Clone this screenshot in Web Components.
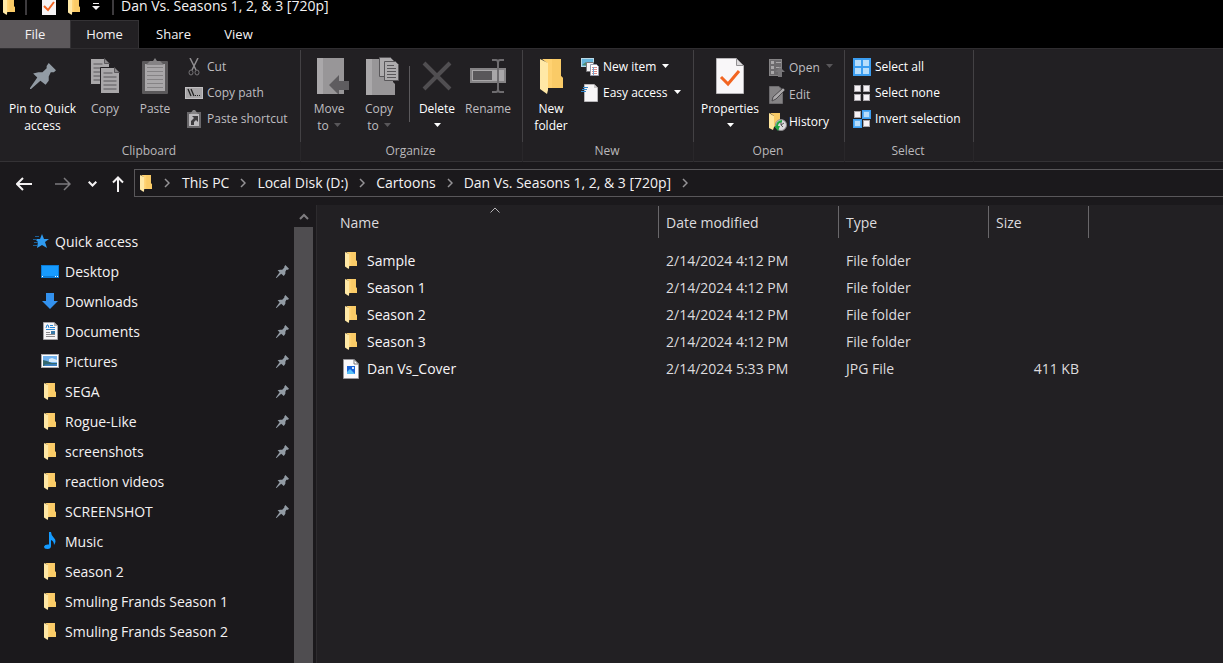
<!DOCTYPE html>
<html lang="en">
<head>
<meta charset="utf-8">
<title>Dan Vs. Seasons 1, 2, &amp; 3 [720p]</title>
<style>
  html, body { margin: 0; height: 100%; background: #1b191c; }
  body { font-family: "Open Sans", "Noto Sans", sans-serif; color: #f4f2f3; overflow: hidden; }
</style>
</head>
<body>
<explorer-window></explorer-window>
<script>
const folder = '<path d="M2 0H21V17L23 19V29H7V4z" fill="#ffd271"/><path d="M12 0H21V17L23 19V29H12z" fill="#f6c661" opacity=".6"/><path d="M0 0L8 4V31L7 35L0 30z" fill="#ffe8a6"/>';
const sheet = (x, y) => `<g transform="translate(${x} ${y})"><path d="M0 0H14L19 5V26H0z" fill="#a9a7a9" stroke="#222023"/><path d="M14 0V5H19" fill="#8a888a" stroke="#59575a"/><path d="M3 5.5H12M3 9.5H16M3 13.5H16M3 17.500H16M3 21.500H16" stroke="#59575a"/></g>`;
const tile = (x, y, on) => `<rect x="${x}" y="${y}" width="6" height="6" fill="${on ? '#b7ddfb' : '#f6f2f6'}" stroke="${on ? '#5aaef2' : '#a9a6aa'}"/>`;
const pin = '<path d="M18 0L25 7L23 9H20L18 13V17L15 21L10 17L1 25H0V24L7 14L3 10L8 9H12L16 5V3z" fill="#929ba4"/>';
const ICONS = {
  folder: ['0 0 23 35', 12, 17, folder],
  folderBig: ['0 0 23 35', 23, 35, folder],
  pin: ['0 0 25 25', 13, 13, pin],
  pinBig: ['0 0 25 25', 26, 26, pin],
  check: ['0 0 14 18', 14, 18, '<path d="M0 0H11L14 3V18H0z" fill="#f5f3f5"/><path d="M2 9L6 13L12 5" fill="none" stroke="#f26522" stroke-width="2"/>'],
  customize: ['0 0 8 7', 8, 7, '<path d="M1 0H7V1H1zM0 3H8L4 7z" fill="#f4f2f3"/>'],
  copy: ['0 0 30 36', 30, 36, sheet(0.5, 0.5) + sheet(10.5, 9.5)],
  paste: ['0 0 26 36', 26, 36, '<rect y="3" width="26" height="33" rx="1" fill="#5b595b"/><rect x="3" y="6" width="20" height="27" fill="#a9a7a9"/><path d="M5 9.500H21M5 13.500H21M5 17.500H21M5 21.500H21M5 25.500H21M5 29.500H21" stroke="#858385"/><path d="M4 7L8 3H11L13 0L15 3H18L22 7z" fill="#858385"/>'],
  cut: ['0 0 12 18', 18, 18, '<path d="M2 0L8 12M10 0L4 12" fill="none" stroke="#8f8d90" stroke-width="1.500"/><ellipse cx="3" cy="14.500" rx="2" ry="2.500" fill="none" stroke="#777578"/><ellipse cx="9" cy="14.500" rx="2" ry="2.500" fill="none" stroke="#777578"/>'],
  path: ['0 0 18 12', 18, 12, '<rect x=".5" y=".5" width="17" height="11" fill="#a7a5a7" stroke="#c2c0c2"/><path d="M3 2L6 9M6 2L9 9" stroke="#222" stroke-width="1.300"/><path d="M10 8H11V9H10zM12 8H13V9H12zM14 8H15V9H14z" fill="#222"/>'],
  shortcut: ['0 0 14 18', 18, 18, '<rect y="2" width="14" height="16" fill="#69676a"/><path d="M2 4H12V16H2z" fill="#bcbabd"/><path d="M3 4L6 0H8L11 4z" fill="#858385"/><path d="M5 6H11V12L9 10L7 12V15H4V11L7 8z" fill="#3d3b3e"/>'],
  move: ['-8 0 40 36', 40, 36, '<path d="M0 0H27V36H0z" fill="#989698"/><path d="M0 0H6V36H0z" fill="#aaa8aa"/><path d="M12 27L22 17V23H32V32H22V37z" fill="#5e5c5f"/>'],
  copyTo: ['-8 0 42 38', 42, 38, '<path d="M0 2H27V25L29 27V38H0z" fill="#989698"/><path d="M0 2H6V38H0z" fill="#aaa8aa"/><g fill="#aeacae" stroke="#59575a"><path d="M13.500.5H24.500L27.500 3.500V19.500H13.500z"/><path d="M18.500 4.500H29.500L32.500 7.500V23.500H18.500z"/><path d="M21 8.500H28M21 11.500H30M21 14.500H30M21 17.500H30M21 20.500H30"/></g>'],
  del: ['0 0 30 30', 30, 30, '<path d="M2 2L28 28M28 2L2 28" stroke="#504e51" stroke-width="4"/>'],
  rename: ['0 0 36 34', 36, 34, '<rect x="1" y="10" width="34" height="13" fill="#a9a7a9" stroke="#858385" stroke-width="2"/><rect x="3" y="12" width="19" height="9" fill="#59575a"/><path d="M22 1H26Q28 1 28 4Q28 1 30 1H34M28 3V31M22 33H26Q28 33 28 30Q28 33 30 33H34" fill="none" stroke="#6e6c6f" stroke-width="2"/>'],
  newItem: ['0 0 18 18', 18, 18, '<rect x=".5" y=".5" width="12" height="8" fill="#67b5dc" stroke="#bad9e7"/><path d="M1 7L5 4L9 8z" fill="#4f8c73"/><path d="M5.500 4.500H12.500V13.500H5.500z" fill="#f5f3f5" stroke="#77767a"/><path d="M9.500 6.500H15.500L17.500 8.500V17.500H9.500z" fill="#fff" stroke="#99a"/><path d="M11 9.500H16M11 11.500H16M11 13.500H16M11 15.500H16" stroke="#d88"/><path d="M12.500 9V17" stroke="#6aa9db"/>'],
  easy: ['0 0 18 18', 18, 18, '<path d="M3.500.5H13L16.500 4V17.500H3.500z" fill="#f8f6f8" stroke="#b7b5b8"/><path d="M13 0V4H17z" fill="#c9c7c9"/><path d="M2 3.500H7M1 5.500H6M0 7.500H5" stroke="#3187cc"/>'],
  props: ['0 0 28 36', 28, 36, '<path d="M.5.5H20.500L27.500 7.500V35.500H.5z" fill="#f9f7f9" stroke="#b7b5b8"/><path d="M20.500.5V7.500H27.500z" fill="#dddbdd" stroke="#918f92"/><path d="M5 19L12 26L23 13" fill="none" stroke="#f26522" stroke-width="3"/>'],
  open: ['0 0 18 18', 18, 18, '<rect x=".5" y=".5" width="12" height="16" fill="#6d6b6e" stroke="#858385"/><path d="M2 2H5V5H2zM2 7H5V10H2zM2 12H5V15H2z" fill="#a9a7a9"/><path d="M7 3.500H12M7 8.500H12" stroke="#a9a7a9"/><path d="M11 8L16 13H13V18H9V13H6z" fill="#777578"/>'],
  edit: ['0 0 18 18', 18, 18, '<path d="M.5.5H10L13.500 4V17.500H.5z" fill="#858385" stroke="#6d6b6e"/><path d="M3 15L4 11L14 2L16 4L7 13z" fill="#aaa8aa" stroke="#4c4a4d"/>'],
  history: ['0 0 18 18', 18, 18, '<path d="M1 0H11V14H5V3z" fill="#f7ca66"/><path d="M0 0L5 3V14L4 17L0 15z" fill="#ffe59c"/><circle cx="12" cy="12" r="5.500" fill="#dcdadd" stroke="#8b898c"/><path d="M12 9V12L15 10M12 12L14 14" fill="none" stroke="#555"/><path d="M13 7Q7 8 7 13H5L9 18L11 13H9Q9 10 13 9z" fill="#22a443"/>'],
  selAll: ['0 0 18 18', 18, 18, '<rect width="18" height="18" fill="#3b9df0"/><path d="M2 2H8V8H2zM10 2H16V8H10zM2 10H8V16H2zM10 10H16V16H10z" fill="#b7ddfb"/>'],
  selNone: ['0 0 18 18', 18, 18, tile(1.5, 1.5) + tile(10.5, 1.5) + tile(1.5, 10.5) + tile(10.5, 10.5)],
  selInv: ['0 0 18 18', 18, 18, '<path d="M9 0H18V9H9V18H0V9H9z" fill="#3b9df0"/>' + tile(1.5, 1.5) + tile(10.5, 1.5, 1) + tile(1.5, 10.5, 1) + tile(10.5, 10.5)],
  back: ['0 0 16 14', 16, 14, '<path d="M1 7H16M7 1L1 7L7 13" fill="none" stroke="currentColor" stroke-width="2"/>'],
  fwd: ['0 0 16 14', 16, 14, '<path d="M0 7H15M9 1L15 7L9 13" fill="none" stroke="currentColor" stroke-width="1.500"/>'],
  down: ['0 0 9 6', 9, 6, '<path d="M.7.7L4.500 4.500L8.300.7" fill="none" stroke="currentColor" stroke-width="2"/>'],
  up: ['0 0 12 16', 12, 16, '<path d="M6 16V1M1 6.500L6 1.500L11 6.500" fill="none" stroke="currentColor" stroke-width="2"/>'],
  crumb: ['0 0 6 10', 6, 10, '<path d="M1 1L5 5L1 9" fill="none" stroke="#959396" stroke-width="1.500"/>'],
  sort: ['0 0 10 6', 10, 6, '<path d="M.5 5.500L5 1L9.500 5.500" fill="none" stroke="#b5b3b6"/>'],
  scrollUp: ['0 0 10 7', 10, 7, '<path d="M1 6L5 2L9 6" fill="none" stroke="#7f7d80" stroke-width="2"/>'],
  star: ['0 0 18 16', 18, 16, '<path d="M10 1L12 6L17 6L13 9L15 15L10 12L5 15L6 9L3 6H8z" fill="#2f9bf0"/><path d="M3 3.500H7M1 6.500H5M2 9.500H6M1 12.500H5" stroke="#1c5f96"/>'],
  desktop: ['0 0 18 13', 18, 13, '<rect width="18" height="13" fill="#0b7bd6"/><path d="M1 1H17V11H1z" fill="#179bff"/><path d="M1 11H2V12H1zM14 11H15V12H14zM16 11H17V12H16z" fill="#fff"/>'],
  downloads: ['0 0 16 16', 16, 16, '<path d="M4 0H12V8H16L8 16L0 8H4z" fill="#3391ee"/>'],
  documents: ['0 0 15 18', 15, 18, '<path d="M.5.5H11L14.500 4V17.500H.5z" fill="#f7f5f7" stroke="#a3a1a4"/><path d="M11 0V4H15z" fill="#aeacae"/><path d="M3 6L4 3H5L6 6" fill="none" stroke="#2786d4"/><path d="M7 3.500H10M7 5.500H12M3 7.500H12" stroke="#2786d4"/><path d="M3 10.500H7M3 12.500H12M3 14.500H12" stroke="#8a888b"/><path d="M8 9H12V12H8z" fill="#3a79a8"/>'],
  pictures: ['0 0 18 14', 18, 14, '<rect x=".5" y=".5" width="17" height="13" fill="#fff" stroke="#aaa8ab"/><path d="M2 2H16V12H2z" fill="#73b3ef"/><path d="M8 5L11 4L16 6V8H8z" fill="#d8ebfa"/><path d="M2 6L6 7L11 9L16 9V12H2z" fill="#35696f"/><path d="M4 10.500L16 10V12H3z" fill="#3d82c5"/>'],
  music: ['0 0 12 18', 12, 18, '<path d="M5 0H7Q7 3 10 6Q13 9 10 13Q10 9 7 8V14Q7 17 3.500 17Q0 17 0 14.500Q1 12 5 12.500z" fill="#149bff"/>'],
  jpg: ['0 0 16 20', 16, 20, '<path d="M.5.5H11L15.500 5V19.500H.5z" fill="#fbf9fb" stroke="#98969a"/><path d="M11 .5V5H15.500z" fill="#fff" stroke="#77757a"/><path d="M4 7H12V15H4z" fill="#1a63d8"/><path d="M4 15V13L7 10L12 15z" fill="#57c0f8"/><path d="M9 8H11V10H9z" fill="#cfe6ff"/>'],
  caret: ['0 0 7 4', 7, 4, '<path d="M0 0H7L3.500 4z" fill="currentColor"/>']
};

const RESET = `
  button { font: inherit; color: inherit; background: none; border: 0; padding: 0; margin: 0; text-align: inherit; }
  a { color: inherit; text-decoration: none; }
`;

function define(name, markup) {
  customElements.define(name, class extends HTMLElement {
    connectedCallback() {
      if (this.shadowRoot) return;
      const t = document.createElement('template');
      t.innerHTML = typeof markup === 'function' ? markup(this) : markup;
      this.attachShadow({ mode: 'open' }).append(t.content.cloneNode(true));
    }
  });
}

define('ui-icon', el => {
  const [box, w, h, body] = ICONS[el.getAttribute('name')];
  return `<style>:host { display: block; flex: none; } svg { display: block; margin: auto; }</style>
    <svg viewBox="${box}" width="${w}" height="${h}" ${w < 13 ? 'preserveAspectRatio="none"' : ''} aria-hidden="true">${body}</svg>`;
});

define('title-bar', `
  <style>
    ${RESET}
    :host { display: flex; align-items: flex-start; height: 20px; background: #000; }
    .tools { display: flex; align-items: center; height: 20px; margin-top: -4px; padding-left: 3px; }
    .bar { width: 2px; height: 18px; background: #3d3b3e; margin: 0 15px 0 10px; }
    .bar.end { margin: 0 7px 0 12px; }
    button { margin-right: 12px; }
    button.last { margin-right: 0; }
    .title { font-size: 14px; line-height: 20px; }
  </style>
  <div class="tools">
    <ui-icon name="folder"></ui-icon><span class="bar"></span>
    <button aria-label="Properties"><ui-icon name="check"></ui-icon></button>
    <button aria-label="New folder"><ui-icon name="folder"></ui-icon></button>
    <button class="last" aria-label="Customize toolbar"><ui-icon name="customize"></ui-icon></button>
    <span class="bar end"></span>
    <span class="title">Dan Vs. Seasons 1, 2, &amp; 3 [720p]</span>
  </div>`);

define('ribbon-tabs', `
  <style>
    ${RESET}
    :host { display: flex; height: 28px; background: #000; font-size: 13px; }
    button { box-sizing: border-box; height: 28px; padding: 0; text-align: center; }
    .file { width: 70px; background: #5c585b; }
    .home { width: 69px; background: #222023; border: 1px solid #343235; border-bottom: 0; padding: 0 0 2px; }
    .share { width: 69px; }
    .view { width: 61px; }
  </style>
  <button class="file">File</button><button class="home">Home</button><button class="share">Share</button><button class="view">View</button>`);

define('ribbon-group', el => `
  <style>
    :host { display: grid; grid-template-rows: 92px 20px; box-sizing: border-box; flex: none; }
    .tools { display: flex; align-items: flex-start; border-right: 1px solid #434144; }
    .name { font-size: 12px; line-height: 18px; text-align: center; color: #bab8bb; border-right: 1px solid #29272a; padding-right: 2px; }
  </style>
  <div class="tools"><slot></slot></div>
  <div class="name">${el.getAttribute('name')}</div>`);

define('ribbon-button', el => `
  <style>
    ${RESET}
    :host { display: block; font-size: 12px; line-height: 17px; color: #fff; }
    :host([off]) { color: #bfbdc0; }
    button { display: block; width: 100%; padding-top: 6px; text-align: center; }
    .art { display: flex; align-items: center; justify-content: center; height: 40px; margin-bottom: 4px; }
    .line { display: flex; align-items: center; justify-content: center; gap: 5px; height: 17px; white-space: nowrap; }
    .caret { margin-bottom: 2px; }
    :host([off]) .caret { color: #59575a; }
  </style>
  <button><span class="art"><ui-icon name="${el.getAttribute('icon')}"></ui-icon></span>
    <span class="line">${el.getAttribute('label')}</span>
    <span class="line">${el.getAttribute('more') || ''}${el.hasAttribute('menu') ? '<ui-icon class="caret" name="caret"></ui-icon>' : ''}</span>
  </button>`);

define('small-button', el => `
  <style>
    ${RESET}
    :host { display: block; font-size: 12px; line-height: 18px; color: #fff; }
    :host([off]) { color: #bfbdc0; }
    button { display: flex; align-items: center; height: var(--row, 26px); white-space: nowrap; }
    .art { display: block; width: 18px; margin-right: var(--gap, 4px); }
    .caret { margin: 0 0 3px 6px; }
    :host([off]) .caret { color: #59575a; }
  </style>
  <button><span class="art"><ui-icon name="${el.getAttribute('icon')}"></ui-icon></span>${el.getAttribute('label')}${el.hasAttribute('menu') ? '<ui-icon class="caret" name="caret"></ui-icon>' : ''}</button>`);

define('ribbon-bar', `
  <style>
    :host { display: flex; height: 114px; box-sizing: border-box; padding-top: 1px; background: #222023; border-top: 1px solid #2f2d30; border-bottom: 1px solid #343235; }
    .g1 { width: 301px; } .g2 { width: 222px; } .g3 { width: 171px; } .g4 { width: 151px; } .g5 { width: 129px; }
    .w50 { width: 50px; } .w52 { width: 52px; } .pin { width: 75px; margin-left: 5px; } .props { width: 68px; margin-left: 2px; }
    .first { margin-left: 3px; }
    .stack { padding: 4px 0 0 5px; }
    .stack.wide { padding-left: 8px; }
    .stack.tall { --row: 27px; --gap: 2px; }
    .rule { width: 1px; height: 56px; margin: 16px 2px 0 5px; background: #5b595c; }
  </style>
  <ribbon-group class="g1" name="Clipboard">
    <ribbon-button class="pin" icon="pinBig" label="Pin to Quick" more="access"></ribbon-button>
    <ribbon-button class="w50" off icon="copy" label="Copy"></ribbon-button>
    <ribbon-button class="w50" off icon="paste" label="Paste"></ribbon-button>
    <div class="stack">
      <small-button off icon="cut" label="Cut"></small-button>
      <small-button off icon="path" label="Copy path"></small-button>
      <small-button off icon="shortcut" label="Paste shortcut"></small-button>
    </div>
  </ribbon-group>
  <ribbon-group class="g2" name="Organize">
    <ribbon-button class="w50 first" off menu icon="move" label="Move" more="to"></ribbon-button>
    <ribbon-button class="w50" off menu icon="copyTo" label="Copy" more="to"></ribbon-button>
    <span class="rule"></span>
    <ribbon-button class="w50" menu icon="del" label="Delete"></ribbon-button>
    <ribbon-button class="w52" off icon="rename" label="Rename"></ribbon-button>
  </ribbon-group>
  <ribbon-group class="g3" name="New">
    <ribbon-button class="w50 first" icon="folderBig" label="New" more="folder"></ribbon-button>
    <div class="stack">
      <small-button menu icon="newItem" label="New item"></small-button>
      <small-button menu icon="easy" label="Easy access"></small-button>
    </div>
  </ribbon-group>
  <ribbon-group class="g4" name="Open">
    <ribbon-button class="props" menu icon="props" label="Properties"></ribbon-button>
    <div class="stack tall">
      <small-button off menu icon="open" label="Open"></small-button>
      <small-button off icon="edit" label="Edit"></small-button>
      <small-button icon="history" label="History"></small-button>
    </div>
  </ribbon-group>
  <ribbon-group class="g5" name="Select">
    <div class="stack wide">
      <small-button icon="selAll" label="Select all"></small-button>
      <small-button icon="selNone" label="Select none"></small-button>
      <small-button icon="selInv" label="Invert selection"></small-button>
    </div>
  </ribbon-group>`);

define('address-bar', `
  <style>
    ${RESET}
    :host { display: flex; align-items: center; height: 43px; box-sizing: border-box; font-size: 14px; background: #1b191c; }
    .moves { display: flex; align-items: center; width: 134px; flex: none; }
    .moves button { width: 26px; }
    .moves .back { width: 24px; margin: 0 15px 0 12px; }
    .moves .fwd { width: 24px; color: #7c7a7d; }
    .moves .down { width: 28px; margin-left: 3px; }
    .moves .up { width: 24px; }
    nav { display: flex; align-items: center; flex: 1; box-sizing: border-box; height: 28px; border: 1px solid #59575a; border-right: 0; padding-left: 5px; margin-bottom: 1px; white-space: nowrap; }
    .sep { width: 28px; }
    .sep:first-of-type { width: 30px; }
    a { line-height: 20px; }
  </style>
  <div class="moves">
    <button class="back" aria-label="Back"><ui-icon name="back"></ui-icon></button>
    <button class="fwd" aria-label="Forward"><ui-icon name="fwd"></ui-icon></button>
    <button class="down" aria-label="Recent locations"><ui-icon name="down"></ui-icon></button>
    <button class="up" aria-label="Up"><ui-icon name="up"></ui-icon></button>
  </div>
  <nav aria-label="Address">
    <ui-icon name="folder"></ui-icon>
    <span class="sep"><ui-icon name="crumb"></ui-icon></span><a href="#pc">This PC</a>
    <span class="sep"><ui-icon name="crumb"></ui-icon></span><a href="#d">Local Disk (D:)</a>
    <span class="sep"><ui-icon name="crumb"></ui-icon></span><a href="#cartoons">Cartoons</a>
    <span class="sep"><ui-icon name="crumb"></ui-icon></span><a href="#danvs">Dan Vs. Seasons 1, 2, &amp; 3 [720p]</a>
    <span class="sep"><ui-icon name="crumb"></ui-icon></span>
  </nav>`);

define('side-item', el => `
  <style>
    ${RESET}
    :host { display: block; font-size: 14px; line-height: 20px; --in: 40px; }
    :host([root]) { --in: 32px; }
    a { display: flex; align-items: center; height: 30px; padding: 0 5px 0 var(--in); white-space: nowrap; }
    .art { width: 20px; margin-right: 5px; }
    :host([root]) .art { width: 18px; }
    .label { flex: 1; padding-top: 2px; }
  </style>
  <a href="#item"><span class="art"><ui-icon name="${el.getAttribute('icon') || 'folder'}"></ui-icon></span>
  <span class="label"><slot></slot></span>${el.hasAttribute('pinned') ? '<ui-icon name="pin"></ui-icon>' : ''}</a>`);

define('side-bar', `
  <style>
    ${RESET}
    :host { display: grid; grid-template-columns: 1fr 19px; width: 317px; flex: none; background: #1b191c; border-right: 1px solid #2d2b2e; padding-right: 3px; box-sizing: border-box; overflow: hidden; }
    .tree { padding-top: 21px; overflow: hidden; }
    .scroll { display: grid; grid-template-rows: 22px 1fr; }
    .scroll button { display: flex; align-items: center; justify-content: center; }
    .thumb { background: #4f4d50; }
  </style>
  <nav class="tree" aria-label="Navigation pane">
    <side-item root icon="star">Quick access</side-item>
    <side-item icon="desktop" pinned>Desktop</side-item>
    <side-item icon="downloads" pinned>Downloads</side-item>
    <side-item icon="documents" pinned>Documents</side-item>
    <side-item icon="pictures" pinned>Pictures</side-item>
    <side-item pinned>SEGA</side-item>
    <side-item pinned>Rogue-Like</side-item>
    <side-item pinned>screenshots</side-item>
    <side-item pinned>reaction videos</side-item>
    <side-item pinned>SCREENSHOT</side-item>
    <side-item icon="music">Music</side-item>
    <side-item>Season 2</side-item>
    <side-item>Smuling Frands Season 1</side-item>
    <side-item>Smuling Frands Season 2</side-item>
  </nav>
  <div class="scroll"><button aria-label="Scroll up"><ui-icon name="scrollUp"></ui-icon></button><div class="thumb"></div></div>`);

const FILES = [
  ['folder', 'Sample', '2/14/2024 4:12 PM', 'File folder', ''],
  ['folder', 'Season 1', '2/14/2024 4:12 PM', 'File folder', ''],
  ['folder', 'Season 2', '2/14/2024 4:12 PM', 'File folder', ''],
  ['folder', 'Season 3', '2/14/2024 4:12 PM', 'File folder', ''],
  ['jpg', 'Dan Vs_Cover', '2/14/2024 5:33 PM', 'JPG File', '411 KB']
];

define('file-list', `
  <style>
    :host { display: block; flex: 1; background: #222023; padding: 1px 0 0 15px; overflow: hidden; font-size: 14px; line-height: 20px; }
    table { width: 100%; table-layout: fixed; border-collapse: separate; border-spacing: 0; }
    th, td { padding: 0 10px 0 7px; text-align: left; font-weight: 400; white-space: nowrap; color: #dddbde; }
    th:first-child, td:first-child { padding-left: 8px; }
    th { position: relative; height: 32px; padding-top: 2px; border-right: 1px solid #69676a; box-sizing: border-box; }
    th:last-child { border: 0; }
    .sort { position: absolute; top: 1px; left: 50%; margin-left: -5px; }
    .space td { height: 9px; }
    td { height: 27px; }
    .name { width: 327px; } .date { width: 180px; } .type { width: 150px; } .size { width: 100px; }
    .cell { display: flex; align-items: center; color: #f7f5f8; }
    .art { width: 16px; margin: 0 8px 0 3px; }
    td.num { text-align: right; }
  </style>
  <table>
    <thead><tr><th class="name">Name<ui-icon class="sort" name="sort"></ui-icon></th><th class="date">Date modified</th><th class="type">Type</th><th class="size">Size</th><th></th></tr></thead>
    <tbody><tr class="space" aria-hidden="true"><td colspan="5"></td></tr>
    ${FILES.map(([i, n, d, t, s]) => `<tr><td><span class="cell"><span class="art"><ui-icon name="${i}"></ui-icon></span>${n}</span></td><td>${d}</td><td>${t}</td><td class="num">${s}</td><td></td></tr>`).join('')}
    </tbody>
  </table>`);

define('explorer-window', `
  <style>
    :host { display: flex; flex-direction: column; height: 100vh; }
    title-bar, ribbon-tabs, ribbon-bar, address-bar { flex: none; }
    main { display: flex; flex: 1; min-height: 0; }
  </style>
  <title-bar></title-bar>
  <ribbon-tabs></ribbon-tabs>
  <ribbon-bar></ribbon-bar>
  <address-bar></address-bar>
  <main><side-bar></side-bar><file-list></file-list></main>`);
</script>
</body>
</html>
